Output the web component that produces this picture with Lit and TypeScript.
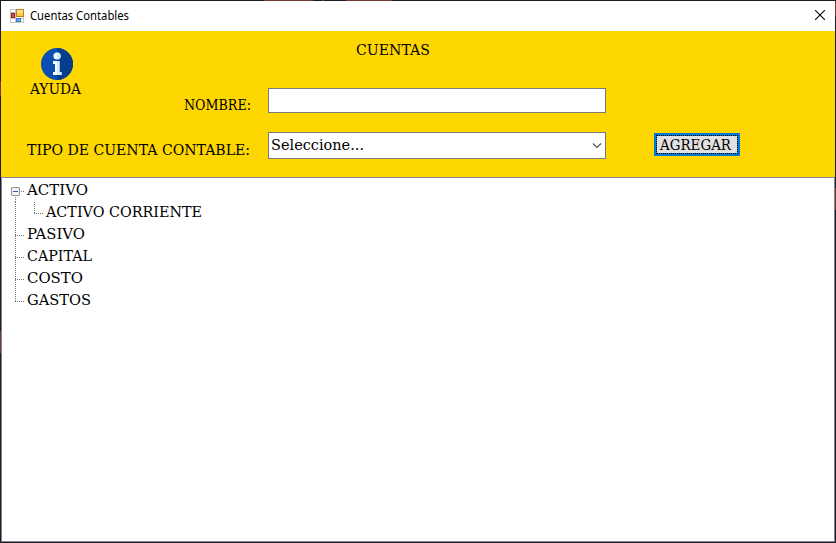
import { LitElement, html, svg, css } from "lit";
import { customElement, property } from "lit/decorators.js";

/* Single line of slab-serif text, fitted to a given width; baseline sits 15px below the top. */
@customElement("slab-text")
class SlabText extends LitElement {
  @property() text = "";
  @property({ type: Number }) width = 60;
  static styles = css`
    :host { display: block; height: 20px; flex: none; }
    svg { display: block; overflow: visible; }
    text { font-family: "DejaVu Serif", serif; font-size: 15px; fill: #000; }
  `;
  render() {
    return html`<svg width=${this.width} height="20">
      <text x="0" y="15" textLength=${this.width} lengthAdjust="spacingAndGlyphs">${this.text}</text>
    </svg>`;
  }
}

interface Account { name: string; width: number; depth: number; box?: boolean; last?: boolean }

const ACCOUNTS: Account[] = [
  { name: "ACTIVO", width: 61, depth: 0, box: true },
  { name: "ACTIVO CORRIENTE", width: 156, depth: 1 },
  { name: "PASIVO", width: 58, depth: 0 },
  { name: "CAPITAL", width: 65, depth: 0 },
  { name: "COSTO", width: 56, depth: 0 },
  { name: "GASTOS", width: 64, depth: 0, last: true },
];

@customElement("account-tree")
class AccountTree extends LitElement {
  static styles = css`
    :host { display: block; padding-top: 2px; }
    .row { display: flex; height: 22px; }
    svg { display: block; flex: none; }
    .dots { stroke: #777; stroke-width: 1; stroke-dasharray: 1 1; fill: none; }
  `;
  private lines(a: Account) {
    if (a.box) return svg`
      <path class="dots" d="M13.5 17V22M19 11.5H23"/>
      <rect x="9.5" y="7.5" width="8" height="8" rx=".6" fill="#f2f2f2" stroke="#919191"/>
      <path d="M11 11.5H16" stroke="#3c5aa5"/>`;
    if (a.depth) return svg`<path class="dots" d="M13.5 0V22M32.5 0V11M32 11.5H42"/>`;
    return svg`<path class="dots" d=${a.last ? "M13.5 0V11M13 11.5H23" : "M13.5 0V22M13 11.5H23"}/>`;
  }
  render() {
    return ACCOUNTS.map(a => html`<div class="row">
      <svg width=${a.depth ? 44 : 25} height="22">${this.lines(a)}</svg>
      <slab-text .text=${a.name} .width=${a.width}></slab-text>
    </div>`);
  }
}

@customElement("app-root")
class AppRoot extends LitElement {
  static styles = css`
    :host { display: flex; flex-direction: column; box-sizing: border-box; width: 836px; height: 543px; padding: 1px; background: #1c1b20; position: relative; overflow: hidden; }
    svg { display: block; }
    .title { height: 30px; flex: none; display: flex; align-items: center; padding: 0 10px 0 9px; background: #fff; }
    .name { font: 12px "Noto Sans", sans-serif; margin-left: 6px; flex: 1; }
    .name svg { overflow: visible; }
    .close { margin-top: -2px; }
    .form { height: 146px; flex: none; background: #ffd700; display: grid; grid-template-columns: 250px 17px 338px 48px 86px; grid-template-rows: 57px 25px 19px 27px; }
    .help { grid-area: 1 / 1 / 3 / 2; margin-left: 29px; padding-top: 17px; width: 51px; display: flex; flex-direction: column; align-items: center; }
    .help svg { margin: 0 0 -1px 3px; }
    .heading { grid-area: 1 / 3; margin: 9px 0 0 88px; }
    .label { justify-self: end; grid-column: 1; }
    .l1 { grid-row: 2; margin-top: 7px; }
    .l2 { grid-row: 4; margin: 8px 1px 0 0; }
    .field { grid-column: 3; box-sizing: border-box; border: 1px solid #7a7a7a; background: #fff; }
    .f1 { grid-row: 2; }
    .f2 { grid-row: 4; display: flex; justify-content: space-between; padding: 2px 3px 0 2px; }
    .chev { margin-top: 7px; }
    .btn { grid-area: 4 / 5; height: 23px; margin-top: 1px; box-sizing: border-box; border: 2px solid #0078d7; background: #0078d7; }
    .face { box-sizing: border-box; height: 19px; border: 1px dotted #000; background: #e1e1e1; background-clip: padding-box; padding-left: 3px; }
    .face slab-text { margin-top: -1px; height: 17px; }
    account-tree { flex: 1; border: 1px solid #828790; box-sizing: border-box; background: #fff; }
    .frame { position: absolute; inset: 0; pointer-events: none; }
  `;
  render() {
    return html`
      <div class="title">
        <svg width="14" height="14" viewBox="0 0 14 14">
          <path d="M.5 .5H13.5V13.5H.5Z" fill="#fff" stroke="#c5c5c5"/>
          <path d="M5.5 0V14M0 3.5H5M0 9.5H14" stroke="#c5c5c5" fill="none"/>
          <rect x="6.5" y=".5" width="7" height="7" fill="#ffcb45" stroke="#b98516"/>
          <path d="M7 1H13V4H7Z" fill="#ffe08a"/>
          <rect x="1.5" y="4.5" width="3" height="4" fill="#d65a40" stroke="#9b1e17"/>
          <rect x="6.5" y="9.5" width="4" height="3" fill="#75a9f5" stroke="#3971cb"/>
        </svg>
        <div class="name"><svg width="99" height="16"><text x="0" y="12" textLength="99" lengthAdjust="spacingAndGlyphs">Cuentas Contables</text></svg></div>
        <svg class="close" width="10" height="10"><path d="M0 0L10 10M10 0L0 10" stroke="#000" stroke-width="1.1"/></svg>
      </div>
      <div class="form">
        <div class="help">
          <svg width="32" height="32" viewBox="0 0 32 32">
            <circle cx="16" cy="16" r="16" fill="#0a4eb2"/>
            <path d="M16 0A16 16 0 0 1 16 32Z" fill="#063e8b"/>
            <circle cx="16" cy="8" r="3.6" fill="#f5fcff"/>
            <path d="M12 13H18.5V24H20.5V27H12V24H14V16H12Z" fill="#f5fcff"/>
            <path d="M16 4.4A3.6 3.6 0 0 1 16 11.6ZM16 13H18.5V24H20.5V27H16Z" fill="#cfeeff"/>
          </svg>
          <slab-text .text=${"AYUDA"} .width=${51}></slab-text>
        </div>
        <slab-text class="heading" .text=${"CUENTAS"} .width=${74}></slab-text>
        <slab-text class="label l1" .text=${"NOMBRE:"} .width=${67}></slab-text>
        <div class="field f1"></div>
        <slab-text class="label l2" .text=${"TIPO DE CUENTA CONTABLE:"} .width=${223}></slab-text>
        <div class="field f2">
          <slab-text .text=${"Seleccione..."} .width=${93}></slab-text>
          <svg class="chev" width="10" height="8"><path d="M1 1.5L5 5.5L9 1.5" fill="none" stroke="#555" stroke-width="1.2"/></svg>
        </div>
        <div class="btn"><div class="face"><slab-text .text=${"AGREGAR"} .width=${71}></slab-text></div></div>
      </div>
      <account-tree></account-tree>
      <svg class="frame" width="836" height="543">
        <path d="M264 .5H313M322 .5H324M346 .5H392M.5 81V96M.5 331V353M835.5 1V16M835.5 188V210" stroke="#74372c"/>
      </svg>
    `;
  }
}
